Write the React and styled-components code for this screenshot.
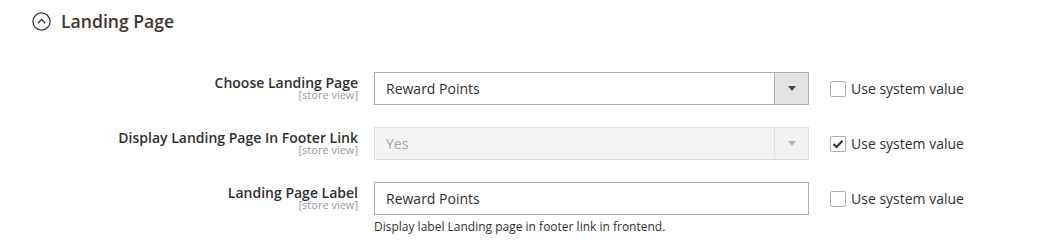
import React from 'react'
import styled, {createGlobalStyle} from 'styled-components'

const GlobalStyle = createGlobalStyle`
    body {
        margin: 0;
        background: #fff;
        font-family: 'Open Sans', 'Liberation Sans', sans-serif;
        color: #303030;
    }
`

const Section = styled.section`
    padding: 8px 0 0 32px;
    width: 1027px;
`

const Header = styled.div`
    display: flex;
    align-items: center;
    gap: 10px;
    height: 26px;
`

const Title = styled.h2`
    margin: 0;
    font-size: 17.6px;
    font-weight: 600;
    color: #41362f;
    line-height: 26px;
`

const Fields = styled.div`
    display: grid;
    grid-template-columns: 326px 435px auto;
    column-gap: 16px;
    row-gap: 22px;
    margin-top: 38px;
    align-items: start;
`

const LabelCell = styled.div`
    text-align: right;
    padding-top: 3px;
`

const LabelText = styled.div`
    font-size: 14px;
    font-weight: 600;
    line-height: 15px;
    color: #303030;
`

const Scope = styled.div`
    font-size: 11px;
    line-height: 10px;
    color: #999;
`

const Control = styled.div`
    display: flex;
    flex-direction: column;
`

const SelectBox = styled.div`
    display: flex;
    height: 33px;
    box-sizing: border-box;
    border: 1px solid ${p => (p.disabled ? '#dcdcdc' : '#adadad')};
    background: ${p => (p.disabled ? '#f4f4f4' : '#fff')};
`

const SelectValue = styled.div`
    flex: 1;
    padding-left: 11px;
    font-size: 14px;
    line-height: 31px;
    color: ${p => (p.disabled ? '#a4a4a4' : '#303030')};
`

const ArrowButton = styled.div`
    width: 33px;
    display: flex;
    align-items: center;
    justify-content: center;
    border-left: 1px solid ${p => (p.disabled ? '#e2e2e2' : '#adadad')};
    background: ${p => (p.disabled ? '#f1f1f1' : '#e3e3e3')};

    &::after {
        content: '';
        border-left: 4px solid transparent;
        border-right: 4px solid transparent;
        border-top: 5px solid ${p => (p.disabled ? '#b5b5b5' : '#514943')};
    }
`

const TextInput = styled.div`
    height: 33px;
    box-sizing: border-box;
    border: 1px solid #adadad;
    padding-left: 11px;
    font-size: 14px;
    line-height: 31px;
    color: #303030;
`

const Note = styled.div`
    margin-top: 3px;
    font-size: 12px;
    line-height: 18px;
    color: #303030;
`

const SystemValue = styled.label`
    display: flex;
    align-items: center;
    gap: 5px;
    height: 33px;
    padding-left: 5px;
    font-size: 14px;
    color: #303030;
`

const Checkbox = styled.span`
    width: 16px;
    height: 16px;
    box-sizing: border-box;
    border: 1px solid #adadad;
    border-radius: 2px;
    background: #fff;
    display: flex;
    align-items: center;
    justify-content: center;
`

const CollapseIcon = () => (
    <svg width="19" height="19" viewBox="0 0 19 19">
        <circle cx="9.5" cy="9.5" r="8.6" fill="none" stroke="#41362f" strokeWidth="1.3" />
        <path d="M5.8 11.2 L9.5 7.5 L13.2 11.2" fill="none" stroke="#41362f" strokeWidth="1.3" />
    </svg>
)

const Check = () => (
    <svg width="12" height="10" viewBox="0 0 12 10">
        <path d="M1.5 5 L4.5 8 L10.5 1.8" fill="none" stroke="#303030" strokeWidth="2" />
    </svg>
)

const Select = ({value, disabled}) => (
    <SelectBox disabled={disabled}>
        <SelectValue disabled={disabled}>{value}</SelectValue>
        <ArrowButton disabled={disabled} />
    </SelectBox>
)

const UseSystem = ({checked}) => (
    <SystemValue>
        <Checkbox>{checked && <Check />}</Checkbox>
        Use system value
    </SystemValue>
)

const Label = ({children}) => (
    <LabelCell>
        <LabelText>{children}</LabelText>
        <Scope>[store view]</Scope>
    </LabelCell>
)

export default function App() {
    return (
        <>
            <GlobalStyle />
            <Section>
                <Header>
                    <CollapseIcon />
                    <Title>Landing Page</Title>
                </Header>
                <Fields>
                    <Label>Choose Landing Page</Label>
                    <Control>
                        <Select value="Reward Points" />
                    </Control>
                    <UseSystem />

                    <Label>Display Landing Page In Footer Link</Label>
                    <Control>
                        <Select value="Yes" disabled />
                    </Control>
                    <UseSystem checked />

                    <Label>Landing Page Label</Label>
                    <Control>
                        <TextInput>Reward Points</TextInput>
                        <Note>Display label Landing page in footer link in frontend.</Note>
                    </Control>
                    <UseSystem />
                </Fields>
            </Section>
        </>
    )
}
